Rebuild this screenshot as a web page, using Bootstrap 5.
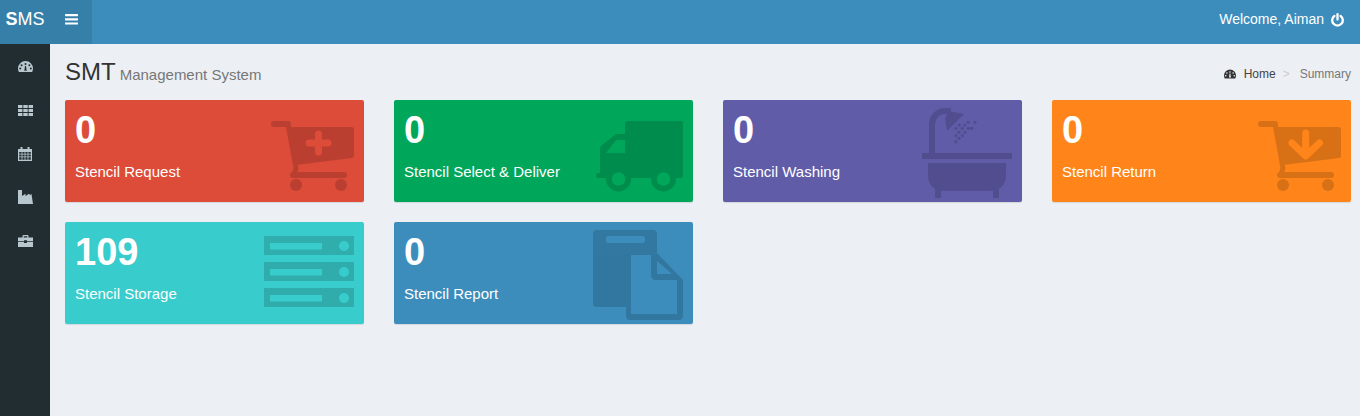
<!DOCTYPE html>
<html lang="en">
<head>
<meta charset="utf-8">
<title>SMS</title>
<link href="https://cdn.jsdelivr.net/npm/bootstrap@5.3.0/dist/css/bootstrap.min.css" rel="stylesheet">
<style>
html,body{height:100%;overflow:hidden}
body{font-family:"Liberation Sans",Arial,sans-serif;font-size:14px;background:#ecf0f5;color:#333}
.top-bar{height:44px;background:#3c8dbc;color:#fff}
.brand-zone{width:92px;background:#367fa9}
.brand-name{width:50px;font-size:18px;line-height:38px;text-align:center;color:#fff;text-decoration:none}
.bars-btn{width:42px;padding:0 0 6px 15px;color:#fff;border:0;background:transparent}
.bars-btn svg,.side-link svg,.crumbs svg,.welcome svg{display:block}
.welcome{padding:0 16px 5px 0;font-size:14px;color:#fff}
.welcome svg{margin-left:7px}
.page-body{height:372px}
.side-rail{width:50px;background:#222d32;padding-top:1px}
.side-link{height:43.5px;color:#b8c7ce}
.main-area{padding:15px 9px 0 15px;min-width:0}
.head-row{height:41px}
.page-title{margin:0;font-size:24px;line-height:1.1;font-weight:400;color:#333}
.page-title small{font-size:15px;color:#777;margin-left:4px}
.crumbs{font-size:12px;color:#777;padding-top:6px}
.crumbs a{color:#444;text-decoration:none}
.crumbs .sep{color:#ccc;padding:0 10px 0 7px}
.tile-grid{display:grid;grid-template-columns:repeat(4,299px);column-gap:30px;row-gap:20px}
.tile{position:relative;height:102px;padding:10px;color:#fff;border-radius:2px;box-shadow:0 1px 1px rgba(0,0,0,.1);overflow:hidden}
.tile h3{font-size:38px;line-height:42px;font-weight:700;margin:-1px 0 11px;position:relative;z-index:1}
.tile p{font-size:15px;line-height:20px;margin:0;position:relative;z-index:1}
.tile svg{position:absolute;top:0;right:0}
.t-red{background:#dd4b39;--bg:#dd4b39}
.t-green{background:#00a65a;--bg:#00a65a}
.t-purple{background:#605ca8;--bg:#605ca8}
.t-orange{background:#ff851b;--bg:#ff851b}
.t-teal{background:#39cccc;--bg:#39cccc}
.t-blue{background:#3c8dbc;--bg:#3c8dbc}
.shade{opacity:.15}
.cut-line{fill:none;stroke:var(--bg)}
.cut-fill{fill:var(--bg);stroke:none}
</style>
</head>
<body class="d-flex flex-column">
<header class="top-bar d-flex align-items-stretch justify-content-between">
  <div class="brand-zone d-flex">
    <a class="brand-name" href="#"><b>S</b>MS</a>
    <button class="bars-btn" type="button" aria-label="Toggle">
      <svg width="13" height="11" viewBox="0 0 13 11" fill="currentColor"><rect y="0" width="13" height="2.2" rx=".4"/><rect y="4.2" width="13" height="2.2" rx=".4"/><rect y="8.4" width="13" height="2.2" rx=".4"/></svg>
    </button>
  </div>
  <div class="welcome d-flex align-items-center">Welcome, Aiman
    <svg width="13" height="14" viewBox="0 0 13 14" fill="none" stroke="currentColor" stroke-width="2.3" stroke-linecap="round"><path d="M3.4 3A5.3 5.300 0 1 0 9.600 3"/><path d="M6.500 1.200V6.600"/></svg>
  </div>
</header>
<div class="page-body d-flex">
  <nav class="side-rail flex-shrink-0">
    <div class="side-link d-flex align-items-center justify-content-center">
      <svg width="15" height="11" viewBox="0 0 15 11"><path fill="currentColor" fill-rule="evenodd" d="M7.500 0A7.500 7.500 0 0 0 0 7.500C0 8.800.3 10 .9 11h13.200c.6-1 .9-2.200.9-3.500A7.500 7.500 0 0 0 7.500 0ZM7.500 2a1 1 0 1 1 0 2 1 1 0 0 1 0-2ZM3.600 3.200a1 1 0 1 1 0 2 1 1 0 0 1 0-2ZM11.400 3.200a1 1 0 1 1 0 2 1 1 0 0 1 0-2ZM2.200 6.600a1 1 0 1 1 0 2 1 1 0 0 1 0-2ZM12.800 6.600a1 1 0 1 1 0 2 1 1 0 0 1 0-2ZM6.300 9.800 7 5h1l.7 4.800Z"/></svg>
    </div>
    <div class="side-link d-flex align-items-center justify-content-center">
      <svg width="15" height="11" viewBox="0 0 15 11" fill="currentColor"><rect width="4.400" height="3"/><rect x="5.300" width="4.400" height="3"/><rect x="10.600" width="4.400" height="3"/><rect y="4" width="4.400" height="3"/><rect x="5.300" y="4" width="4.400" height="3"/><rect x="10.600" y="4" width="4.400" height="3"/><rect y="8" width="4.400" height="3"/><rect x="5.300" y="8" width="4.400" height="3"/><rect x="10.600" y="8" width="4.400" height="3"/></svg>
    </div>
    <div class="side-link d-flex align-items-center justify-content-center">
      <svg width="14" height="14" viewBox="0 0 14 14"><path fill="currentColor" fill-rule="evenodd" d="M0 2h2.500V0h2v2h5V0h2v2H14v12H0ZM1.200 5v1.800h2.400V5Zm3.200 0v1.800h2.200V5Zm3 0v1.800h2.200V5Zm3 0v1.800h2.400V5ZM1.200 7.600v1.800h2.400V7.600Zm3.200 0v1.800h2.200V7.600Zm3 0v1.800h2.200V7.600Zm3 0v1.800h2.400V7.600ZM1.200 10.200V12.800h2.400v-2.600Zm3.200 0V12.800h2.200v-2.600Zm3 0V12.800h2.200v-2.600Zm3 0V12.800h2.400v-2.600Z"/></svg>
    </div>
    <div class="side-link d-flex align-items-center justify-content-center">
      <svg width="15" height="14" viewBox="0 0 15 14"><path fill="currentColor" d="M0 0h4v6l3.500-2.200v2.200L11 3.800l1 1.200 1.500-1L15 14H0Z"/></svg>
    </div>
    <div class="side-link d-flex align-items-center justify-content-center">
      <svg width="15" height="12" viewBox="0 0 15 12"><path fill="currentColor" fill-rule="evenodd" d="M4.500 2.500V1a1 1 0 0 1 1-1h4a1 1 0 0 1 1 1v1.500H15v3.700H9v-.9H6v.9H0V2.500ZM5.700 1.200V2.500h3.600V1.200ZM0 7h6v1h3V7h6v5H0Z"/></svg>
    </div>
  </nav>
  <main class="main-area flex-grow-1">
    <div class="head-row d-flex justify-content-between align-items-start">
      <h1 class="page-title">SMT<small>Management System</small></h1>
      <div class="crumbs d-flex align-items-center">
        <svg class="me-2" width="12" height="10" viewBox="0 0 15 11"><path fill="#333" fill-rule="evenodd" d="M7.500 0A7.500 7.500 0 0 0 0 7.500C0 8.800.3 10 .9 11h13.200c.6-1 .9-2.200.9-3.500A7.500 7.500 0 0 0 7.500 0ZM7.500 2a1 1 0 1 1 0 2 1 1 0 0 1 0-2ZM3.600 3.200a1 1 0 1 1 0 2 1 1 0 0 1 0-2ZM11.400 3.200a1 1 0 1 1 0 2 1 1 0 0 1 0-2ZM2.200 6.600a1 1 0 1 1 0 2 1 1 0 0 1 0-2ZM12.800 6.600a1 1 0 1 1 0 2 1 1 0 0 1 0-2ZM6.300 9.800 7 5h1l.7 4.800Z"/></svg>
        <a href="#">Home</a><span class="sep">&gt;</span><span>Summary</span>
      </div>
    </div>
    <div class="tile-grid">
      <div class="tile t-red">
        <h3>0</h3><p>Stencil Request</p>
        <svg width="120" height="102" viewBox="0 0 120 102"><g transform="translate(6 0)">
          <g class="shade"><g stroke="#000" stroke-linecap="round" fill="none"><path stroke-width="6" d="M24 24H38"/><path stroke-width="5" d="M38 24 46 68 44 75"/><path stroke-width="6" d="M43 75H94"/></g><path d="M38 27H101Q104 27 104 30V56Q104 58 102 58L46 65Z"/><circle cx="46" cy="85" r="6"/><circle cx="91" cy="85" r="6"/></g>
          <path class="cut-line" stroke-width="7" stroke-linecap="round" d="M59 43H78M68.500 34V52"/>
        </g></svg>
      </div>
      <div class="tile t-green">
        <h3>0</h3><p>Stencil Select &amp; Deliver</p>
        <svg width="120" height="102" viewBox="0 0 120 102"><g transform="translate(7 0)">
          <g class="shade"><rect x="45" y="21" width="58" height="57" rx="2"/><path d="M36 34H46V78H20V48Q20 47 21 46Z"/><rect x="16" y="73" width="30" height="5" rx="2.500"/><circle cx="38.500" cy="79" r="12.500"/><circle cx="83.500" cy="79" r="12.500"/></g>
          <path class="cut-fill" d="M26 53 36 40H45V53Z"/><circle class="cut-fill" cx="38.500" cy="79" r="6.800"/><circle class="cut-fill" cx="83.500" cy="79" r="6.800"/>
        </g></svg>
      </div>
      <div class="tile t-purple">
        <h3>0</h3><p>Stencil Washing</p>
        <svg width="120" height="102" viewBox="0 0 120 102"><g transform="translate(8 0)">
          <g class="shade"><rect x="12" y="53" width="90" height="6"/><path d="M18 63H96V75Q96 91 78 91H36Q18 91 18 75Z"/><rect x="25" y="85" width="6" height="13"/><rect x="83" y="85" width="6" height="13"/><path fill="none" stroke="#000" stroke-width="6" d="M22 53V24A13 13 0 0 1 35 11H41"/><path d="M35 18 39 11 54 14 37 31Z"/>
          <g><circle cx="58.300" cy="22.300" r="1.600"/><circle cx="65" cy="22.300" r="1.600"/><circle cx="49.300" cy="25" r="1.600"/><circle cx="55" cy="25" r="1.600"/><circle cx="46" cy="28.300" r="1.600"/><circle cx="52.300" cy="28.300" r="1.600"/><circle cx="58.300" cy="28.300" r="1.600"/><circle cx="61.700" cy="28.300" r="1.600"/><circle cx="49" cy="32.300" r="1.600"/><circle cx="55" cy="32.300" r="1.600"/><circle cx="46" cy="35.700" r="1.600"/><circle cx="52.300" cy="35.700" r="1.600"/><circle cx="49" cy="38.300" r="1.600"/><circle cx="45.700" cy="41.700" r="1.600"/></g></g>
        </g></svg>
      </div>
      <div class="tile t-orange">
        <h3>0</h3><p>Stencil Return</p>
        <svg width="120" height="102" viewBox="0 0 120 102"><g transform="translate(6 0)">
          <g class="shade"><g stroke="#000" stroke-linecap="round" fill="none"><path stroke-width="6" d="M24 24H38"/><path stroke-width="5" d="M38 24 46 68 44 75"/><path stroke-width="6" d="M43 75H94"/></g><path d="M38 27H101Q104 27 104 30V56Q104 58 102 58L46 65Z"/><circle cx="46" cy="85" r="6"/><circle cx="91" cy="85" r="6"/></g>
          <path class="cut-line" stroke-width="7" stroke-linecap="round" stroke-linejoin="round" d="M68.700 33V54M55 43 68.700 56 82.500 43"/>
        </g></svg>
      </div>
      <div class="tile t-teal">
        <h3>109</h3><p>Stencil Storage</p>
        <svg width="120" height="102" viewBox="0 0 120 102"><g transform="translate(6 -2)">
          <g class="shade"><rect x="14" y="16" width="90" height="19"/><rect x="14" y="42" width="90" height="19"/><rect x="14" y="68" width="90" height="19"/></g>
          <g class="cut-fill"><rect x="20" y="23" width="52" height="6.500"/><rect x="20" y="49" width="52" height="6.500"/><rect x="20" y="75" width="52" height="6.500"/><circle cx="94" cy="26" r="5"/><circle cx="94" cy="52" r="5"/><circle cx="94" cy="78" r="5"/></g>
        </g></svg>
      </div>
      <div class="tile t-blue">
        <h3>0</h3><p>Stencil Report</p>
        <svg width="120" height="102" viewBox="0 0 120 102"><g transform="translate(7 -2)">
          <g class="shade"><rect x="13" y="10" width="64" height="77" rx="4"/><path d="M77 33 103 60V96Q103 100 99 100H50Q46 100 46 96V87H77Z"/></g>
          <g class="cut-fill"><rect x="26" y="16" width="39" height="7" rx="2"/><path d="M51 35H71V55Q71 60 76 60H97V94H51Z"/><path d="M77 41 92 54H77Z"/></g>
        </g></svg>
      </div>
    </div>
  </main>
</div>
</body>
</html>
